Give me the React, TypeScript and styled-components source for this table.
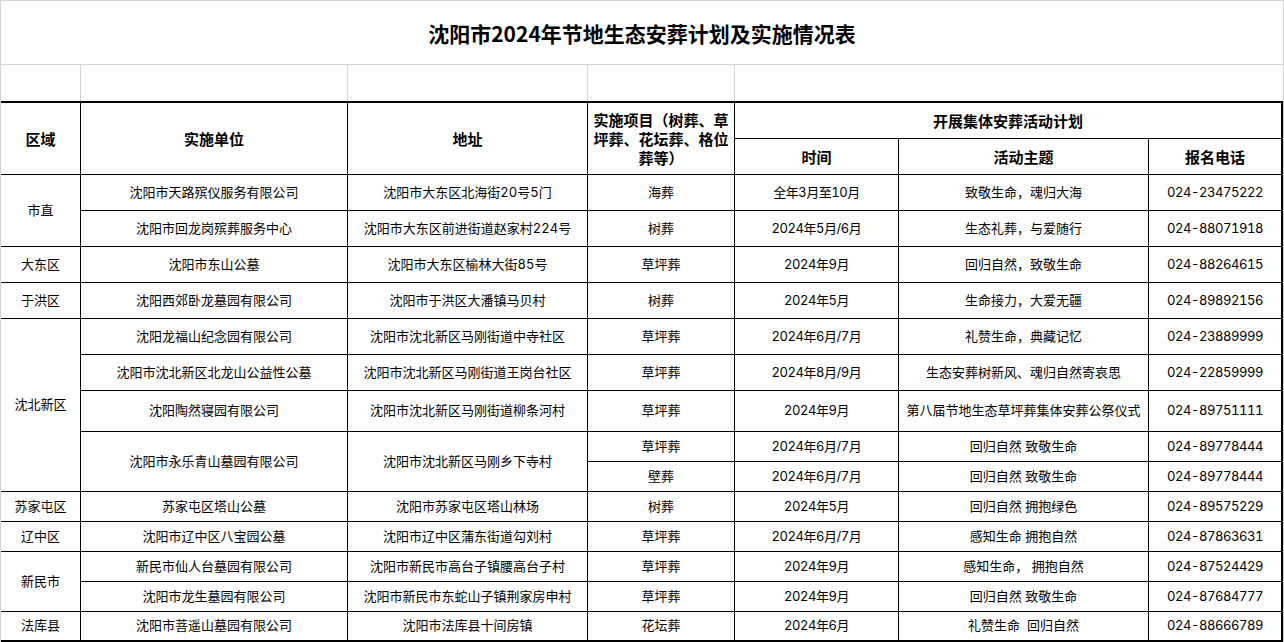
import React from "react";
import styled, { createGlobalStyle } from "styled-components";

const GlobalStyle = createGlobalStyle`
  html, body { margin: 0; padding: 0; background: #fff; }
  body { font-family: "Noto Sans CJK SC", "Noto Sans", sans-serif; color: #000; }
  * { box-sizing: border-box; }
`;

const GRID_GRAY = "#d4d4d4";

const Page = styled.div`
  width: 1284px;
  height: 642px;
  border-top: 1px solid ${GRID_GRAY};
  border-left: 1px solid ${GRID_GRAY};
  border-right: 1px solid ${GRID_GRAY};
  display: flex;
  flex-direction: column;
  overflow: hidden;
`;

const TitleBar = styled.h1`
  margin: 0;
  height: 64px;
  border-bottom: 1px solid ${GRID_GRAY};
  display: flex;
  align-items: center;
  justify-content: center;
  font-size: 21px;
  font-weight: 700;
  letter-spacing: 0;
`;

const SpacerRow = styled.div`
  height: 36px;
  display: grid;
  grid-template-columns: 79px 266px 239px 146px 1fr;
  gap: 1px;
  background: ${GRID_GRAY};
`;

const SpacerCell = styled.div`
  background: #fff;
`;

const Sheet = styled.div`
  display: grid;
  grid-template-columns: 79px 266px 239px 146px 163px 249px 132px;
  grid-template-rows: 35px 35px repeat(6, 35px) 40px repeat(6, 29px) 28px;
  gap: 1px;
  background: #000;
  border-top: 2px solid #000;
  border-right: 2px solid #000;
  border-bottom: 2px solid #000;
`;

const Cell = styled.div<{ $rs?: number; $cs?: number; $head?: boolean; $num?: boolean }>`
  grid-row: span ${(p) => p.$rs ?? 1};
  grid-column: span ${(p) => p.$cs ?? 1};
  background: #fff;
  display: flex;
  align-items: center;
  justify-content: center;
  text-align: center;
  white-space: pre;
  font-family: ${(p) =>
    p.$head
      ? '"Noto Sans CJK SC", sans-serif'
      : 'Inter, "Noto Sans CJK SC", sans-serif'};
  font-variant-numeric: tabular-nums;
  font-size: ${(p) => (p.$head ? "15px" : "13px")};
  font-weight: ${(p) => (p.$head ? 700 : 400)};
  line-height: ${(p) => (p.$head ? "19px" : "18px")};
  letter-spacing: ${(p) => (p.$num ? "-0.45px" : "0")};
  padding-bottom: ${(p) => (p.$head ? "0" : "2px")};
`;

type Act = { type: string; time: string; theme: string; tel: string };
type Item = { unit: string; addr: string; acts: Act[] };
type Group = { region: string; items: Item[] };

const groups: Group[] = [
  {
    region: "市直",
    items: [
      {
        unit: "沈阳市天路殡仪服务有限公司",
        addr: "沈阳市大东区北海街20号5门",
        acts: [{ type: "海葬", time: "全年3月至10月", theme: "致敬生命，魂归大海", tel: "024-23475222" }],
      },
      {
        unit: "沈阳市回龙岗殡葬服务中心",
        addr: "沈阳市大东区前进街道赵家村224号",
        acts: [{ type: "树葬", time: "2024年5月/6月", theme: "生态礼葬，与爱随行", tel: "024-88071918" }],
      },
    ],
  },
  {
    region: "大东区",
    items: [
      {
        unit: "沈阳市东山公墓",
        addr: "沈阳市大东区榆林大街85号",
        acts: [{ type: "草坪葬", time: "2024年9月", theme: "回归自然，致敬生命", tel: "024-88264615" }],
      },
    ],
  },
  {
    region: "于洪区",
    items: [
      {
        unit: "沈阳西郊卧龙墓园有限公司",
        addr: "沈阳市于洪区大潘镇马贝村",
        acts: [{ type: "树葬", time: "2024年5月", theme: "生命接力，大爱无疆", tel: "024-89892156" }],
      },
    ],
  },
  {
    region: "沈北新区",
    items: [
      {
        unit: "沈阳龙福山纪念园有限公司",
        addr: "沈阳市沈北新区马刚街道中寺社区",
        acts: [{ type: "草坪葬", time: "2024年6月/7月", theme: "礼赞生命，典藏记忆", tel: "024-23889999" }],
      },
      {
        unit: "沈阳市沈北新区北龙山公益性公墓",
        addr: "沈阳市沈北新区马刚街道王岗台社区",
        acts: [{ type: "草坪葬", time: "2024年8月/9月", theme: "生态安葬树新风、魂归自然寄哀思", tel: "024-22859999" }],
      },
      {
        unit: "沈阳陶然寝园有限公司",
        addr: "沈阳市沈北新区马刚街道柳条河村",
        acts: [{ type: "草坪葬", time: "2024年9月", theme: "第八届节地生态草坪葬集体安葬公祭仪式", tel: "024-89751111" }],
      },
      {
        unit: "沈阳市永乐青山墓园有限公司",
        addr: "沈阳市沈北新区马刚乡下寺村",
        acts: [
          { type: "草坪葬", time: "2024年6月/7月", theme: "回归自然 致敬生命", tel: "024-89778444" },
          { type: "壁葬", time: "2024年6月/7月", theme: "回归自然 致敬生命", tel: "024-89778444" },
        ],
      },
    ],
  },
  {
    region: "苏家屯区",
    items: [
      {
        unit: "苏家屯区塔山公墓",
        addr: "沈阳市苏家屯区塔山林场",
        acts: [{ type: "树葬", time: "2024年5月", theme: "回归自然 拥抱绿色", tel: "024-89575229" }],
      },
    ],
  },
  {
    region: "辽中区",
    items: [
      {
        unit: "沈阳市辽中区八宝园公墓",
        addr: "沈阳市辽中区蒲东街道勾刘村",
        acts: [{ type: "草坪葬", time: "2024年6月/7月", theme: "感知生命 拥抱自然", tel: "024-87863631" }],
      },
    ],
  },
  {
    region: "新民市",
    items: [
      {
        unit: "新民市仙人台墓园有限公司",
        addr: "沈阳市新民市高台子镇腰高台子村",
        acts: [{ type: "草坪葬", time: "2024年9月", theme: "感知生命， 拥抱自然", tel: "024-87524429" }],
      },
      {
        unit: "沈阳市龙生墓园有限公司",
        addr: "沈阳市新民市东蛇山子镇荆家房申村",
        acts: [{ type: "草坪葬", time: "2024年9月", theme: "回归自然 致敬生命", tel: "024-87684777" }],
      },
    ],
  },
  {
    region: "法库县",
    items: [
      {
        unit: "沈阳市菩遥山墓园有限公司",
        addr: "沈阳市法库县十间房镇",
        acts: [{ type: "花坛葬", time: "2024年6月", theme: "礼赞生命  回归自然", tel: "024-88666789" }],
      },
    ],
  },
];

export default function App() {
  const cells: React.ReactNode[] = [];
  groups.forEach((g, gi) => {
    const total = g.items.reduce((n, it) => n + it.acts.length, 0);
    cells.push(
      <Cell key={`r${gi}`} $rs={total}>
        {g.region}
      </Cell>
    );
    g.items.forEach((it, ii) => {
      cells.push(
        <Cell key={`u${gi}-${ii}`} $rs={it.acts.length}>
          {it.unit}
        </Cell>
      );
      cells.push(
        <Cell key={`a${gi}-${ii}`} $rs={it.acts.length}>
          {it.addr}
        </Cell>
      );
      it.acts.forEach((a, ai) => {
        const k = `${gi}-${ii}-${ai}`;
        cells.push(<Cell key={`t${k}`}>{a.type}</Cell>);
        cells.push(
          <Cell key={`m${k}`} $num>
            {a.time}
          </Cell>
        );
        cells.push(<Cell key={`h${k}`}>{a.theme}</Cell>);
        cells.push(
          <Cell key={`p${k}`} $num>
            {a.tel}
          </Cell>
        );
      });
    });
  });

  return (
    <>
      <GlobalStyle />
      <Page>
        <TitleBar>沈阳市2024年节地生态安葬计划及实施情况表</TitleBar>
        <SpacerRow>
          <SpacerCell />
          <SpacerCell />
          <SpacerCell />
          <SpacerCell />
          <SpacerCell />
        </SpacerRow>
        <Sheet>
          <Cell $head $rs={2}>区域</Cell>
          <Cell $head $rs={2}>实施单位</Cell>
          <Cell $head $rs={2}>地址</Cell>
          <Cell $head $rs={2}>
            实施项目（树葬、草
            <br />
            坪葬、花坛葬、格位
            <br />
            葬等）
          </Cell>
          <Cell $head $cs={3}>开展集体安葬活动计划</Cell>
          <Cell $head>时间</Cell>
          <Cell $head>活动主题</Cell>
          <Cell $head>报名电话</Cell>
          {cells}
        </Sheet>
      </Page>
    </>
  );
}
